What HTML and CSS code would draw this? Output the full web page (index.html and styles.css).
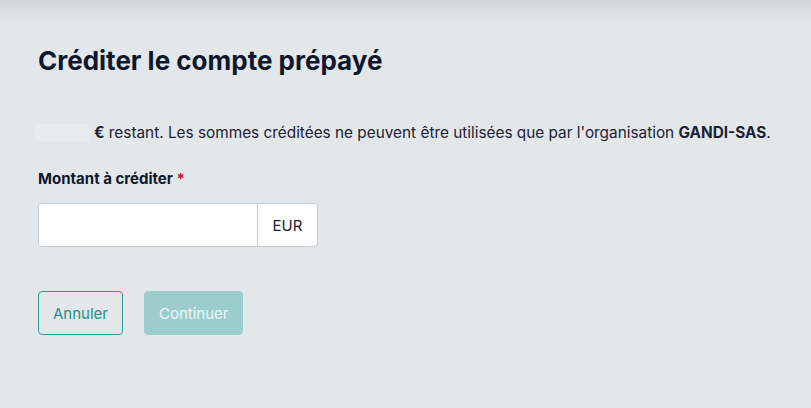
FILE: index.html
```html
<!DOCTYPE html>
<html lang="fr">
<head>
<meta charset="utf-8">
<title>Créditer le compte prépayé</title>
<link rel="stylesheet" href="styles.css">
</head>
<body>
<main class="page">
  <h1 class="title">Créditer le compte prépayé</h1>
  <p class="info"><span class="skeleton"></span><strong>€</strong> restant. Les sommes créditées ne peuvent être utilisées que par l'organisation <strong>GANDI-SAS</strong>.</p>
  <label class="label" for="amount">Montant à créditer <span class="req">*</span></label>
  <div class="field">
    <input class="input" id="amount" type="text">
    <span class="addon">EUR</span>
  </div>
  <div class="actions">
    <button class="btn btn-outline" type="button">Annuler</button>
    <button class="btn btn-primary" type="button" disabled>Continuer</button>
  </div>
</main>
</body>
</html>
```
FILE: styles.css
```css
html, body {
  margin: 0;
  height: 100%;
}
body {
  font-family: Inter, "Noto Sans", sans-serif;
  color: #0f172a;
  background: linear-gradient(#d3d7da 0, #e3e7ea 22px, #e3e7ea 100%);
}
.page {
  padding: 44px 38px 0;
  display: flex;
  flex-direction: column;
  align-items: flex-start;
}
.title {
  margin: 0;
  font-size: 26px;
  font-weight: 700;
  line-height: 34px;
  color: #0e172d;
}
.info {
  margin: 44px 0 0;
  font-size: 15.35px;
  line-height: 22px;
  color: #1b2233;
  white-space: nowrap;
}
.info strong { font-weight: 700; }
.skeleton {
  display: inline-block;
  vertical-align: -4px;
  width: 54px;
  height: 18px;
  margin: 0 5px 0 -3px;
  background: #e9ebed;
  border-radius: 2px;
}
.label {
  margin-top: 25px;
  font-size: 15px;
  font-weight: 700;
  line-height: 20px;
  color: #0e172d;
}
.req { color: #c8102e; }
.field {
  margin-top: 14px;
  display: flex;
  width: 280px;
  height: 44px;
  box-sizing: border-box;
  border: 1px solid #c8ccd1;
  border-radius: 4px;
  background: #fff;
  overflow: hidden;
}
.input {
  flex: 0 0 218px;
  width: 218px;
  min-width: 0;
  box-sizing: border-box;
  border: 0;
  margin: 0;
  padding: 0 12px;
  font: inherit;
  outline: none;
  background: #fff;
}
.addon {
  flex: 1 1 auto;
  min-width: 0;
  display: flex;
  align-items: center;
  justify-content: center;
  border-left: 1px solid #c8ccd1;
  font-size: 15px;
  color: #1b2233;
}
.actions {
  margin-top: 44px;
  display: flex;
  gap: 21px;
}
.btn {
  height: 44px;
  box-sizing: border-box;
  border-radius: 4px;
  font-family: inherit;
  font-size: 15px;
  padding: 0 14px;
  margin: 0;
}
.btn-outline {
  background: transparent;
  border: 1px solid #2a9d9a;
  color: #21908d;
}
.btn-primary {
  background: #9ccdcd;
  border: 1px solid #9ccdcd;
  color: #eef7f7;
}
```
